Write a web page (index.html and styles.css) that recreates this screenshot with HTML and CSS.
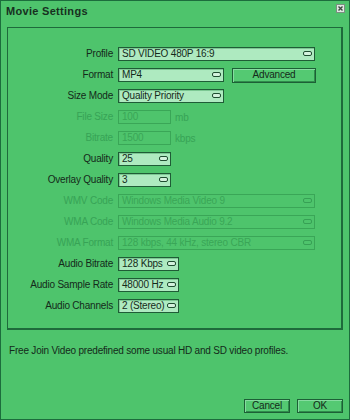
FILE: index.html
```html
<!DOCTYPE html>
<html lang="en">
<head>
  <meta charset="UTF-8">
  <title>Movie Settings</title>
  <link rel="stylesheet" href="styles.css">
</head>
<body>
  <div class="window">
    <div class="titlebar">
      <span class="title">Movie Settings</span>
      <span class="close">
        <svg width="9" height="9" viewBox="0 0 9 9"><rect x="0.5" y="0.5" width="8" height="8" fill="#dfe9e2" stroke="#7b8f82"/><path d="M2.5 2.5 L6.5 6.5 M6.5 2.5 L2.5 6.5" stroke="#3b4a40" stroke-width="1.4"/></svg>
      </span>
    </div>
    <div class="panel">
      <div class="form">
        <label>Profile</label>
        <div class="line"><div class="field combo w-full">SD VIDEO 480P 16:9<i></i></div></div>

        <label>Format</label>
        <div class="line"><div class="field combo w-mid">MP4<i></i></div><button class="btn adv">Advanced</button></div>

        <label>Size Mode</label>
        <div class="line"><div class="field combo w-mid">Quality Priority<i></i></div></div>

        <label class="off">File Size</label>
        <div class="line"><div class="field off w-small">100</div><span class="unit">mb</span></div>

        <label class="off">Bitrate</label>
        <div class="line"><div class="field off w-small">1500</div><span class="unit">kbps</span></div>

        <label>Quality</label>
        <div class="line"><div class="field combo w-small">25<i></i></div></div>

        <label>Overlay Quality</label>
        <div class="line"><div class="field combo w-small">3<i></i></div></div>

        <label class="off">WMV Code</label>
        <div class="line"><div class="field combo off w-full">Windows Media Video 9<i></i></div></div>

        <label class="off">WMA Code</label>
        <div class="line"><div class="field combo off w-full">Windows Media Audio 9.2<i></i></div></div>

        <label class="off">WMA Format</label>
        <div class="line"><div class="field combo off w-full">128 kbps, 44 kHz, stereo CBR<i></i></div></div>

        <label>Audio Bitrate</label>
        <div class="line"><div class="field combo w-audio">128 Kbps<i></i></div></div>

        <label>Audio Sample Rate</label>
        <div class="line"><div class="field combo w-audio">48000 Hz<i></i></div></div>

        <label>Audio Channels</label>
        <div class="line"><div class="field combo w-audio">2 (Stereo)<i></i></div></div>
      </div>
    </div>
    <p class="note">Free Join Video predefined some usual HD and SD video profiles.</p>
    <div class="actions">
      <button class="btn">Cancel</button>
      <button class="btn">OK</button>
    </div>
  </div>
</body>
</html>
```

FILE: styles.css
```css
body {
  margin: 0;
  background: #4ec46c;
  font-family: "Liberation Sans", Arial, sans-serif;
  font-size: 10px;
  letter-spacing: -0.2px;
  color: #142a1a;
}
.window {
  width: 350px;
  height: 420px;
  box-sizing: border-box;
  border: 1px solid #1c6d3c;
  background: #4ec46c;
  display: flex;
  flex-direction: column;
}
.titlebar {
  height: 19px;
  display: flex;
  align-items: center;
  justify-content: space-between;
  padding: 0 4px 0 5px;
}
.title {
  font-weight: bold;
  font-size: 11px;
  letter-spacing: 0.3px;
  color: #17301f;
}
.close {
  display: flex;
  margin-top: -4px;
}
.panel {
  margin: 7px 6px 0 6px;
  height: 303px;
  box-sizing: border-box;
  border: 1px solid #1e6a3b;
  border-right-width: 2px;
  border-bottom-width: 2px;
  padding: 19px 0 0 0;
}
.form {
  display: grid;
  grid-template-columns: 105px 1fr;
  column-gap: 5px;
  row-gap: 7px;
  grid-auto-rows: 14px;
}
.form label {
  text-align: right;
  line-height: 14px;
  white-space: nowrap;
}
.form label.off {
  color: #37a356;
}
.line {
  display: flex;
  align-items: center;
  gap: 8px;
}
.field {
  position: relative;
  height: 14px;
  box-sizing: border-box;
  border: 1px solid #1f5c36;
  box-shadow: inset 1px 1px 0 #7cc893;
  background: #aeeac0;
  line-height: 12px;
  padding-left: 3px;
  white-space: nowrap;
  overflow: hidden;
}
.field.off {
  background: #4ec46c;
  border-color: #3aa657;
  box-shadow: none;
  color: #3aa657;
}
.combo i {
  position: absolute;
  right: 2px;
  top: 3px;
  width: 9px;
  height: 5px;
  box-sizing: border-box;
  border: 1px solid #1f4d30;
  border-radius: 2px;
  background: #d4f2dd;
}
.field.off i {
  border-color: #37a055;
  background: #4ec46c;
}
.w-full { width: 197px; }
.w-mid { width: 106px; }
.w-small { width: 53px; }
.w-audio { width: 61px; }
.unit {
  color: #37a356;
  margin-left: -4px;
}
.btn {
  height: 15px;
  box-sizing: border-box;
  border: 1px solid #1d5f36;
  box-shadow: inset 1px 1px 0 #86dca0, inset -1px -1px 0 #2f8c4b;
  background: #54c972;
  font-family: "Liberation Sans", Arial, sans-serif;
  font-size: 10px;
  letter-spacing: -0.2px;
  color: #142a1a;
  padding: 0;
  line-height: 12px;
}
.adv {
  width: 84px;
}
.note {
  margin: 15px 0 0 8px;
  line-height: 12px;
}
.actions {
  margin-top: auto;
  margin-bottom: 6px;
  display: flex;
  justify-content: flex-end;
  gap: 7px;
  padding-right: 6px;
}
.actions .btn {
  width: 46px;
  height: 14px;
}
```
